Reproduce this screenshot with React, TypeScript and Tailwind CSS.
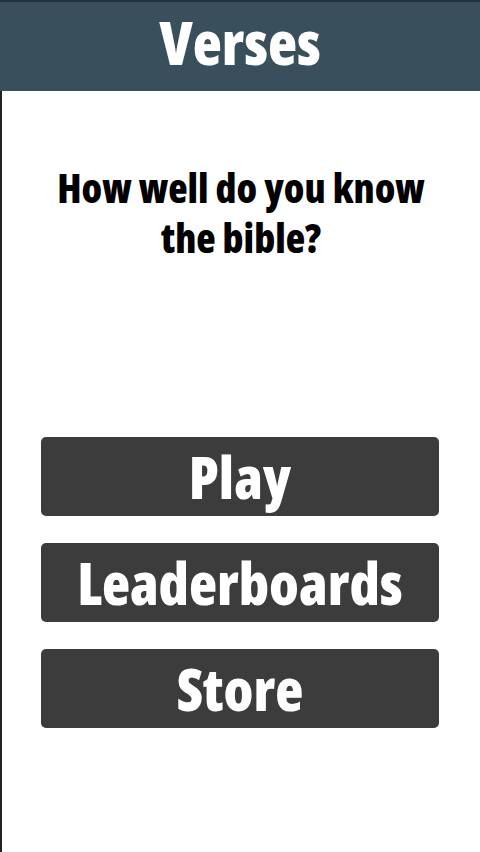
const FONT = { fontFamily: '"Open Sans", Roboto, sans-serif', fontStretch: 'condensed' as const }

const MENU = ['Play', 'Leaderboards', 'Store']

export default function App() {
  return (
    <div className="w-[480px] h-[852px] bg-white flex flex-col overflow-hidden" style={FONT}>
      <header className="h-[91px] shrink-0 bg-[#3a4f5c] border-t-2 border-[#22323c] flex items-center justify-center">
        <h1 className="text-white font-extrabold text-[60px] leading-none -mt-[10px]">Verses</h1>
      </header>
      <main className="flex-1 flex flex-col border-l-2 border-[#222]">
        <p className="mt-[72px] text-center text-black font-extrabold text-[40px] leading-[50px] px-[20px]">
          How well do you know
          <br />
          the bible?
        </p>
        <nav className="mt-[174px] flex flex-col gap-[27px] pl-[39px] pr-[41px]">
          {MENU.map((label) => (
            <button
              key={label}
              className="h-[79px] rounded-[5px] bg-[#3c3c3c] text-white font-extrabold text-[58px] leading-none flex items-center justify-center"
            >
              {label}
            </button>
          ))}
        </nav>
      </main>
    </div>
  )
}
